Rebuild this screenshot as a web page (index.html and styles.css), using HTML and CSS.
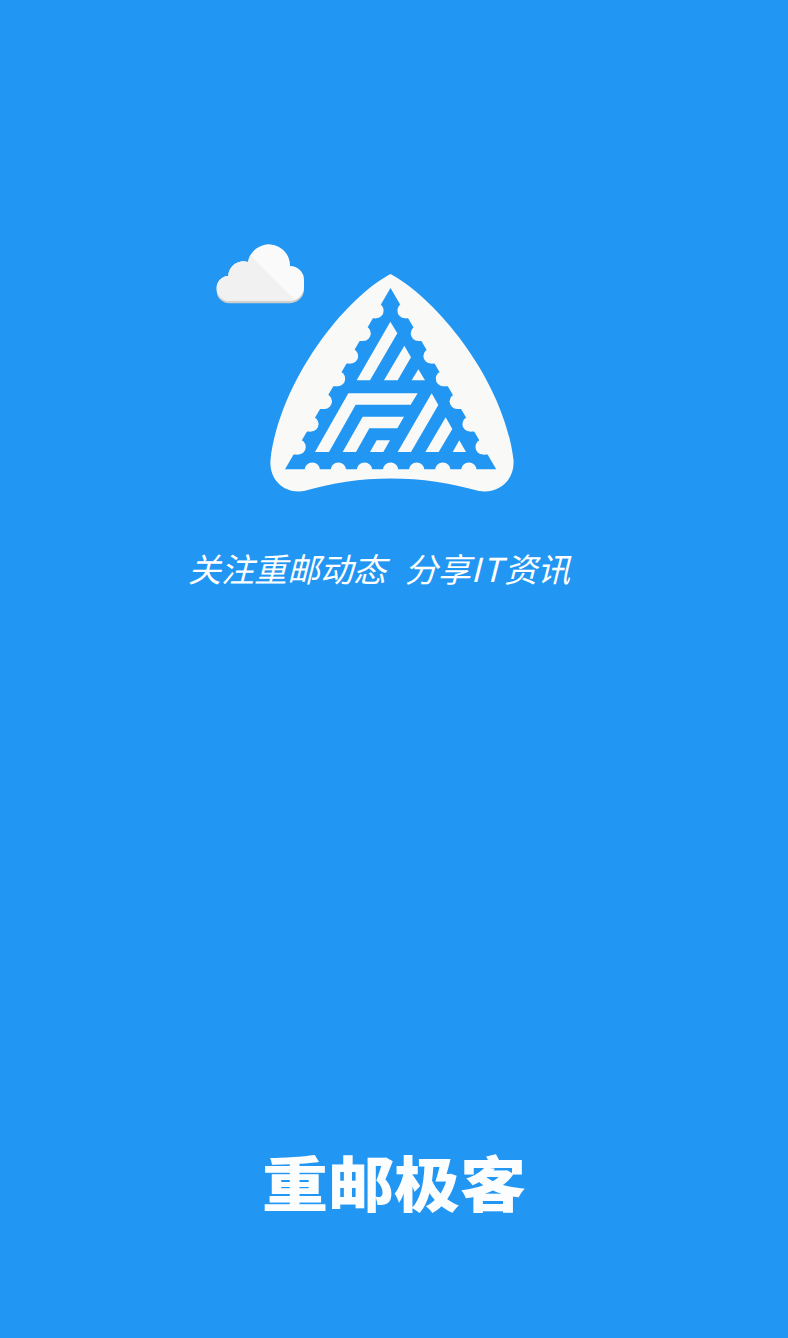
FILE: index.html
```html
<!DOCTYPE html>
<html lang="zh-CN">
<head>
<meta charset="utf-8">
<title>重邮极客</title>
<link rel="stylesheet" href="styles.css">
</head>
<body>
<main class="splash">
  <svg class="emblem" viewBox="216 244 300 250" width="300" height="250" aria-hidden="true">
    <defs>
      <clipPath id="cloud-clip">
        <path d="M228.300 276A15 15 0 0 1 248 262A21.150 21.150 0 0 1 290 266A14 14 0 0 1 304 280V286.800A14 14 0 0 1 290 300.800H229A12.300 12.300 0 0 1 216.700 288.500A12 12 0 0 1 228.300 276Z"/>
      </clipPath>
      <g id="tooth-left"><circle r="7.600"/><polygon points="0,0 0,7.600 -6,7.600"/></g>
      <g id="tooth-right"><circle r="7.600"/><polygon points="0,0 0,7.600 6,7.600"/></g>
    </defs>
    <path class="cloud-edge" d="M216.700 288.500V290.900A12.300 12.300 0 0 0 229 303.200H290A14 14 0 0 0 304 289.200V283Z"/>
    <path class="cloud-light" d="M228.300 276A15 15 0 0 1 248 262A21.150 21.150 0 0 1 290 266A14 14 0 0 1 304 280V286.800A14 14 0 0 1 290 300.800H229A12.300 12.300 0 0 1 216.700 288.500A12 12 0 0 1 228.300 276Z"/>
    <polygon class="cloud-dark" clip-path="url(#cloud-clip)" points="216,221 296,301 216,304"/>
    <path class="peak" d="M390.500 274C345 298 280 380 270.500 460C269 480 284 494 304 491C332 483 360 478.500 391 478.500C422 478.500 450 483 479 491C499 494 515 480 513.500 460C504 380 436 298 390.500 274Z"/>
    <polygon class="well" points="390.500,288 496.200,469.300 285,469.300"/>
    <g class="peak">
      <circle cx="312.300" cy="470.300" r="7.800"/><circle cx="338.400" cy="470.300" r="7.800"/><circle cx="364.500" cy="470.300" r="7.800"/><circle cx="390.600" cy="470.300" r="7.800"/><circle cx="416.700" cy="470.300" r="7.800"/><circle cx="442.800" cy="470.300" r="7.800"/><circle cx="468.900" cy="470.300" r="7.800"/>
      <use href="#tooth-left" x="298.200" y="446.800"/>
      <use href="#tooth-left" x="311" y="424"/>
      <use href="#tooth-left" x="324.400" y="401.300"/>
      <use href="#tooth-left" x="337.600" y="378.700"/>
      <use href="#tooth-left" x="350.600" y="356"/>
      <use href="#tooth-left" x="363.200" y="333.400"/>
      <use href="#tooth-left" x="376" y="310.700"/>
      <use href="#tooth-right" x="405" y="310.700"/>
      <use href="#tooth-right" x="418.300" y="333.400"/>
      <use href="#tooth-right" x="431" y="356"/>
      <use href="#tooth-right" x="443.400" y="378.700"/>
      <use href="#tooth-right" x="457.200" y="401.300"/>
      <use href="#tooth-right" x="470" y="424"/>
      <use href="#tooth-right" x="483" y="446.800"/>
    </g>
    <g class="peak" transform="translate(280 280) scale(.33333)">
      <polygon points="331,125 352,160 270,301 230,301"/>
      <polygon points="373,197 393,232 353,301 312,301"/>
      <polygon points="415,268 435,301 395,301"/>
      <polygon points="205,340 413,340 392,374 227,374 147,516 105,516"/>
      <polygon points="248,410 372,410 352,445 268,445 228,516 188,516"/>
      <polygon points="290,481 330,481 310,516 270,516"/>
      <polygon points="455,340 475,375 393,516 353,516"/>
      <polygon points="497,412 517,447 476,516 436,516"/>
      <polygon points="538,481 558,516 518,516"/>
    </g>
  </svg>
  <p class="tagline">关注重邮动态&nbsp; 分享<span class="latin">IT</span>资讯</p>
  <h1 class="brand">重邮极客</h1>
</main>
</body>
</html>
```
FILE: styles.css
```css
* { box-sizing: border-box; }
html, body { margin: 0; padding: 0; }
body { background: #2196f3; }

.splash {
  width: 788px;
  height: 1338px;
  padding-top: 244px;
  display: flex;
  flex-direction: column;
  overflow: hidden;
  background: #2196f3;
  color: #fff;
  font-family: "Noto Sans CJK SC", "Noto Sans", sans-serif;
}

.emblem { display: block; margin-left: 216px; flex: none; }
.cloud-light { fill: #fafafa; }
.cloud-dark { fill: #f1f1f1; }
.cloud-edge { fill: #cfcfcd; }
.peak { fill: #f9f9f7; }
.well { fill: #2196f3; }

.tagline {
  margin: 48px 0 0 188px;
  font-size: 33px;
  line-height: 52px;
  font-style: italic;
  font-weight: 400;
  word-spacing: 2px;
  white-space: nowrap;
}

.latin { letter-spacing: 2px; }

.brand {
  margin: 542px 0 0 262px;
  font-size: 66px;
  line-height: 88px;
  font-weight: 900;
  white-space: nowrap;
  color: #fcfdff;
  transform: scaleY(.92);
}
```
